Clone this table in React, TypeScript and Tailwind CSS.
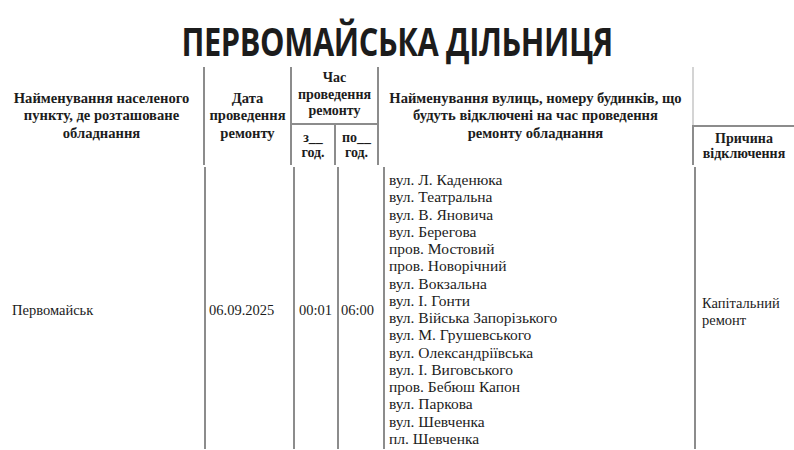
const streets = [
  "вул. Л. Каденюка",
  "вул. Театральна",
  "вул. В. Яновича",
  "вул. Берегова",
  "пров. Мостовий",
  "пров. Новорічний",
  "вул. Вокзальна",
  "вул. І. Гонти",
  "вул. Війська Запорізького",
  "вул. М. Грушевського",
  "вул. Олександріївська",
  "вул. І. Виговського",
  "пров. Бебюш Капон",
  "вул. Паркова",
  "вул. Шевченка",
  "пл. Шевченка",
];

export default function App() {
  return (
    <div className="w-[794px] h-[450px] overflow-hidden bg-white text-[#1c1c1c] font-['Liberation_Serif']">
      {/* Title */}
      <div className="h-[67px] flex items-center justify-center">
        <h1 className="font-['Open_Sans'] font-bold text-[40px] leading-none tracking-[-0.5px] scale-x-[0.77] pt-[14px]">
          ПЕРВОМАЙСЬКА ДІЛЬНИЦЯ
        </h1>
      </div>

      {/* Header row */}
      <div className="flex h-[98px] font-bold text-[14.6px] leading-[17.5px] text-center">
        <div className="w-[203px] flex items-center justify-center">
          <p>
            Найменування населеного
            <br />
            пункту, де розташоване
            <br />
            обладнання
          </p>
        </div>
        <div className="w-[87px] border-l-2 border-[#8c8c8c] flex items-center justify-center">
          <p>
            Дата
            <br />
            проведення
            <br />
            ремонту
          </p>
        </div>
        <div className="w-[87px] border-l-2 border-[#8c8c8c] flex flex-col">
          <div className="h-[58px] border-b-2 border-[#8c8c8c] flex items-center justify-center text-[14px] leading-[16.5px]">
            <p>
              Час
              <br />
              проведення
              <br />
              ремонту
            </p>
          </div>
          <div className="flex-1 flex text-[14px]">
            <div className="w-[42px] flex items-center justify-center leading-[15px]">
              <p>
                з__
                <br />
                год.
              </p>
            </div>
            <div className="flex-1 border-l-2 border-[#8c8c8c] flex items-center justify-center leading-[15px]">
              <p>
                по__
                <br />
                год.
              </p>
            </div>
          </div>
        </div>
        <div className="w-[315px] border-l-2 border-[#8c8c8c] flex items-center justify-center">
          <p>
            Найменування вулиць, номеру будинків, що
            <br />
            будуть відключені на час проведення
            <br />
            ремонту обладнання
          </p>
        </div>
        <div className="flex-1 flex flex-col">
          <div className="h-[58px] border-l-2 border-[#d4d4d4]" />
          <div className="flex-1 border-l-2 border-t-2 border-[#8c8c8c] flex items-center justify-center text-[14px] leading-[15px]">
            <p>
              Причина
              <br />
              відключення
            </p>
          </div>
        </div>
      </div>

      {/* Body row */}
      <div className="flex h-[282px] mt-[2px] text-[14.5px]">
        <div className="w-[204px] flex items-center pl-[12px] pt-[6px]">
          <span>Первомайськ</span>
        </div>
        <div className="w-[89px] border-l-2 border-[#8c8c8c] flex items-center pl-[3px] pt-[6px]">
          <span>06.09.2025</span>
        </div>
        <div className="w-[44px] border-l-2 border-[#8c8c8c] flex items-center pl-[4px] pt-[6px]">
          <span>00:01</span>
        </div>
        <div className="w-[46px] border-l-2 border-[#8c8c8c] flex items-center pl-[2px] pt-[6px]">
          <span>06:00</span>
        </div>
        <div className="w-[311px] border-l-2 border-[#8c8c8c] pl-[4px] pt-[4px] text-[15.5px] leading-[17.25px]">
          {streets.map((s) => (
            <div key={s}>{s}</div>
          ))}
        </div>
        <div className="flex-1 border-l-2 border-[#8c8c8c] flex items-center pl-[6px] pt-[8px] leading-[17px]">
          <p>
            Капітальний
            <br />
            ремонт
          </p>
        </div>
      </div>
    </div>
  );
}
